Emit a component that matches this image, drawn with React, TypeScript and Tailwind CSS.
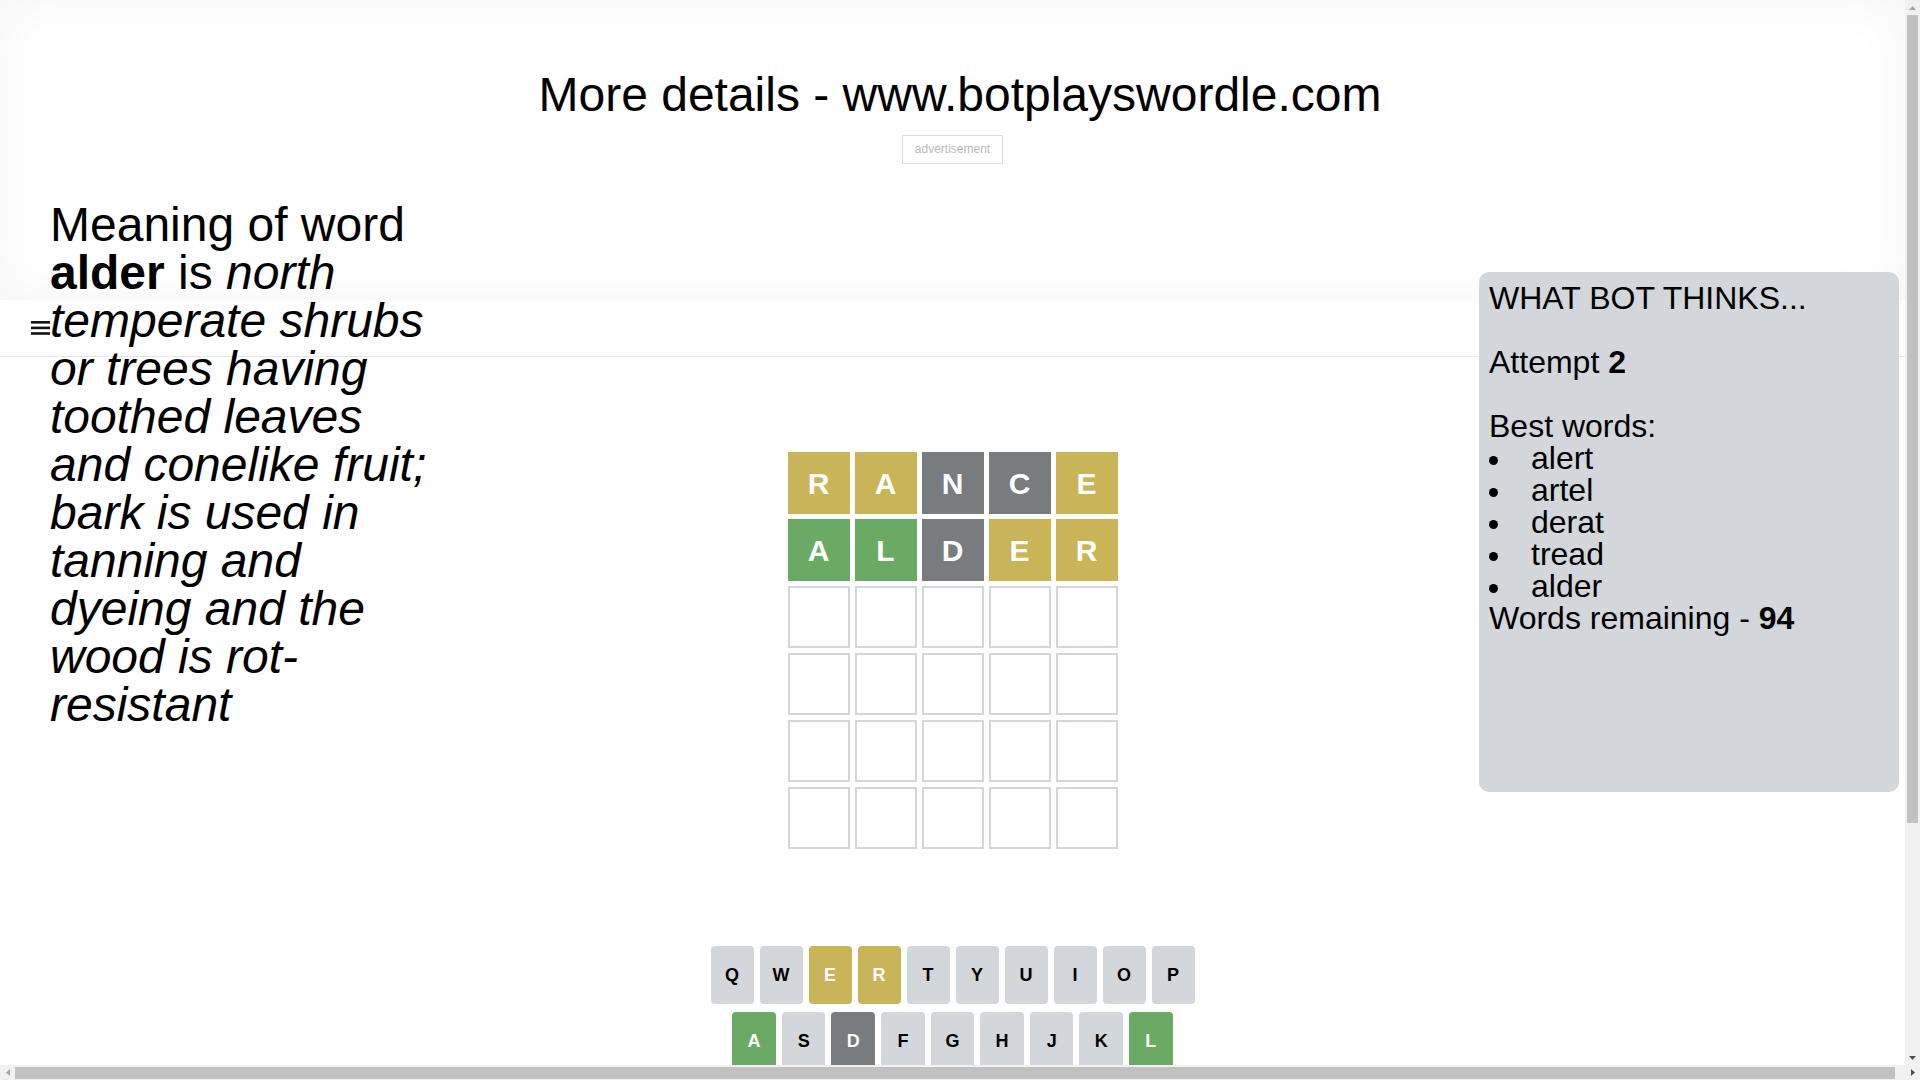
import React from 'react';

type Mark = 'correct' | 'present' | 'absent';

interface Tile {
  letter: string;
  mark: Mark;
}

const guesses: Tile[][] = [
  [
    { letter: 'R', mark: 'present' },
    { letter: 'A', mark: 'present' },
    { letter: 'N', mark: 'absent' },
    { letter: 'C', mark: 'absent' },
    { letter: 'E', mark: 'present' },
  ],
  [
    { letter: 'A', mark: 'correct' },
    { letter: 'L', mark: 'correct' },
    { letter: 'D', mark: 'absent' },
    { letter: 'E', mark: 'present' },
    { letter: 'R', mark: 'present' },
  ],
];

const tileColors: Record<Mark, string> = {
  correct: 'bg-[#6aaa64] border-[#6aaa64] text-white',
  present: 'bg-[#c9b458] border-[#c9b458] text-white',
  absent: 'bg-[#787c7e] border-[#787c7e] text-white',
};

const keyStates: Record<string, Mark> = {
  E: 'present',
  R: 'present',
  A: 'correct',
  L: 'correct',
  D: 'absent',
  N: 'absent',
  C: 'absent',
};

const keyColors: Record<Mark, string> = {
  correct: 'bg-[#6aaa64] text-white',
  present: 'bg-[#c9b458] text-white',
  absent: 'bg-[#787c7e] text-white',
};

const bestWords = ['alert', 'artel', 'derat', 'tread', 'alder'];

const Key: React.FC<{ label: string; wide?: boolean; last?: boolean; children?: React.ReactNode }> = ({
  label,
  wide,
  last,
  children,
}) => {
  const state = keyStates[label];
  return (
    <button
      className={`h-[58px] rounded-[4px] flex items-center justify-center font-bold ${
        wide ? 'flex-[1.5] text-[12px]' : 'flex-1 text-[18px]'
      } ${last ? '' : 'mr-[6px]'} ${state ? keyColors[state] : 'bg-[#d3d6da] text-black'}`}
    >
      {children ?? label}
    </button>
  );
};

const Board: React.FC = () => {
  const rows = [...guesses];
  while (rows.length < 6) rows.push([]);

  return (
    <div className="grid grid-cols-5 gap-[5px] w-[330px]">
      {rows.map((row, r) =>
        [0, 1, 2, 3, 4].map((c) => {
          const tile = row[c];
          return (
            <div
              key={`${r}-${c}`}
              className={`h-[62px] w-[62px] border-2 flex items-center justify-center text-[30px] font-bold ${
                tile ? tileColors[tile.mark] : 'border-[#d3d6da] bg-white'
              }`}
            >
              {tile?.letter}
            </div>
          );
        })
      )}
    </div>
  );
};

const Keyboard: React.FC = () => {
  const row1 = 'QWERTYUIOP'.split('');
  const row2 = 'ASDFGHJKL'.split('');
  const row3 = 'ZXCVBNM'.split('');

  return (
    <div className="flex flex-col gap-[8px] w-[484px]">
      <div className="flex">
        {row1.map((k, i) => (
          <Key key={k} label={k} last={i === row1.length - 1} />
        ))}
      </div>
      <div className="flex">
        <div className="flex-[0.5]" />
        {row2.map((k, i) => (
          <Key key={k} label={k} last={i === row2.length - 1} />
        ))}
        <div className="flex-[0.5]" />
      </div>
      <div className="flex">
        <Key label="ENTER" wide />
        {row3.map((k) => (
          <Key key={k} label={k} />
        ))}
        <Key label="BACK" wide last>
          <svg width="24" height="24" viewBox="0 0 24 24">
            <path
              fill="currentColor"
              d="M22 3H7c-.69 0-1.23.35-1.59.88L0 12l5.41 8.11c.36.53.9.89 1.59.89h15c1.1 0 2-.9 2-2V5c0-1.1-.9-2-2-2zm0 16H7.07L2.4 12l4.66-7H22v14zm-11.59-2L14 13.41 17.59 17 19 15.59 15.41 12 19 8.41 17.59 7 14 10.59 10.41 7 9 8.41 12.59 12 9 15.59z"
            />
          </svg>
        </Key>
      </div>
    </div>
  );
};

const Arrow: React.FC<{ dir: 'up' | 'down' | 'left' | 'right'; color: string }> = ({ dir, color }) => {
  const points = {
    up: '0,4 3.5,0 7,4',
    down: '0,0 7,0 3.5,4',
    left: '4,0 4,7 0,3.5',
    right: '0,0 4,3.5 0,7',
  }[dir];
  const vertical = dir === 'up' || dir === 'down';
  return (
    <svg width={vertical ? 7 : 4} height={vertical ? 4 : 7} viewBox={vertical ? '0 0 7 4' : '0 0 4 7'}>
      <polygon points={points} fill={color} />
    </svg>
  );
};

const Page: React.FC = () => (
  <div className="relative h-full w-[1905px] overflow-hidden bg-white text-black">
    {/* Header */}
    <header className="h-[300px] flex flex-col items-center bg-white shadow-[inset_0_0_50px_rgba(0,0,0,0.045)]">
      <h1 className="w-[1920px] shrink-0 self-start pt-[67px] text-center text-[48px] leading-[55px] font-normal">
        More details - www.botplayswordle.com
      </h1>
      <div className="mt-[13px] border border-[#dddddd] px-[12px] py-[6px] text-[12px] leading-[15px] text-[#bbbbbb]">
        advertisement
      </div>
    </header>

    {/* Nav */}
    <nav className="h-[57px] border-b border-[#e6e6e6] bg-white flex items-center pl-[31px]">
      <svg width="19" height="14" viewBox="0 0 19 14">
        <rect x="0" y="0" width="19" height="2.6" fill="#111" />
        <rect x="0" y="5.6" width="19" height="2.6" fill="#111" />
        <rect x="0" y="11.2" width="19" height="2.6" fill="#111" />
      </svg>
    </nav>

    {/* Game */}
    <main className="flex flex-col items-center pt-[95px]">
      <Board />
      <div className="mt-[97px]">
        <Keyboard />
      </div>
    </main>

    {/* Word meaning */}
    <div className="absolute left-[50px] top-[201px] w-[390px] text-[48px] leading-[48px]">
      Meaning of word <b>alder</b> is{' '}
      <i>
        north temperate shrubs or trees having toothed leaves and conelike fruit; bark is used in tanning and
        dyeing and the wood is rot-resistant
      </i>
    </div>

    {/* Bot panel */}
    <div className="absolute right-[6px] top-[272px] w-[420px] h-[520px] rounded-[10px] bg-[#d3d6da] pl-[10px] pt-[10px] text-[32px] leading-[32px]">
      <div>WHAT BOT THINKS...</div>
      <div className="h-[32px]" />
      <div>
        Attempt <b>2</b>
      </div>
      <div className="h-[32px]" />
      <div>Best words:</div>
      <ul>
        {bestWords.map((w) => (
          <li key={w} className="flex items-start">
            <span className="w-[42px] shrink-0 flex">
              <span className="mt-[14px] w-[9px] h-[9px] rounded-full bg-black" />
            </span>
            {w}
          </li>
        ))}
      </ul>
      <div>
        Words remaining - <b>94</b>
      </div>
    </div>
  </div>
);

export default function App() {
  return (
    <div className="h-screen w-screen flex flex-col overflow-hidden font-['Liberation_Sans',Arial,sans-serif]">
      <div className="flex flex-1 min-h-0">
        <Page />
        {/* Vertical scrollbar */}
        <div className="w-[15px] bg-[#f1f1f1] flex flex-col items-center">
          <div className="h-[15px] flex items-center justify-center">
            <Arrow dir="up" color="#a3a3a3" />
          </div>
          <div className="w-[11px] h-[808px] bg-[#c1c1c1]" />
          <div className="flex-1" />
          <div className="h-[15px] flex items-center justify-center">
            <Arrow dir="down" color="#505050" />
          </div>
        </div>
      </div>
      {/* Horizontal scrollbar */}
      <div className="h-[15px] bg-[#f1f1f1] flex items-center">
        <div className="w-[15px] flex justify-center">
          <Arrow dir="left" color="#a3a3a3" />
        </div>
        <div className="w-[1880px] h-[12px] bg-[#c1c1c1]" />
        <div className="flex-1" />
        <div className="w-[15px] flex justify-center">
          <Arrow dir="right" color="#505050" />
        </div>
      </div>
    </div>
  );
}
